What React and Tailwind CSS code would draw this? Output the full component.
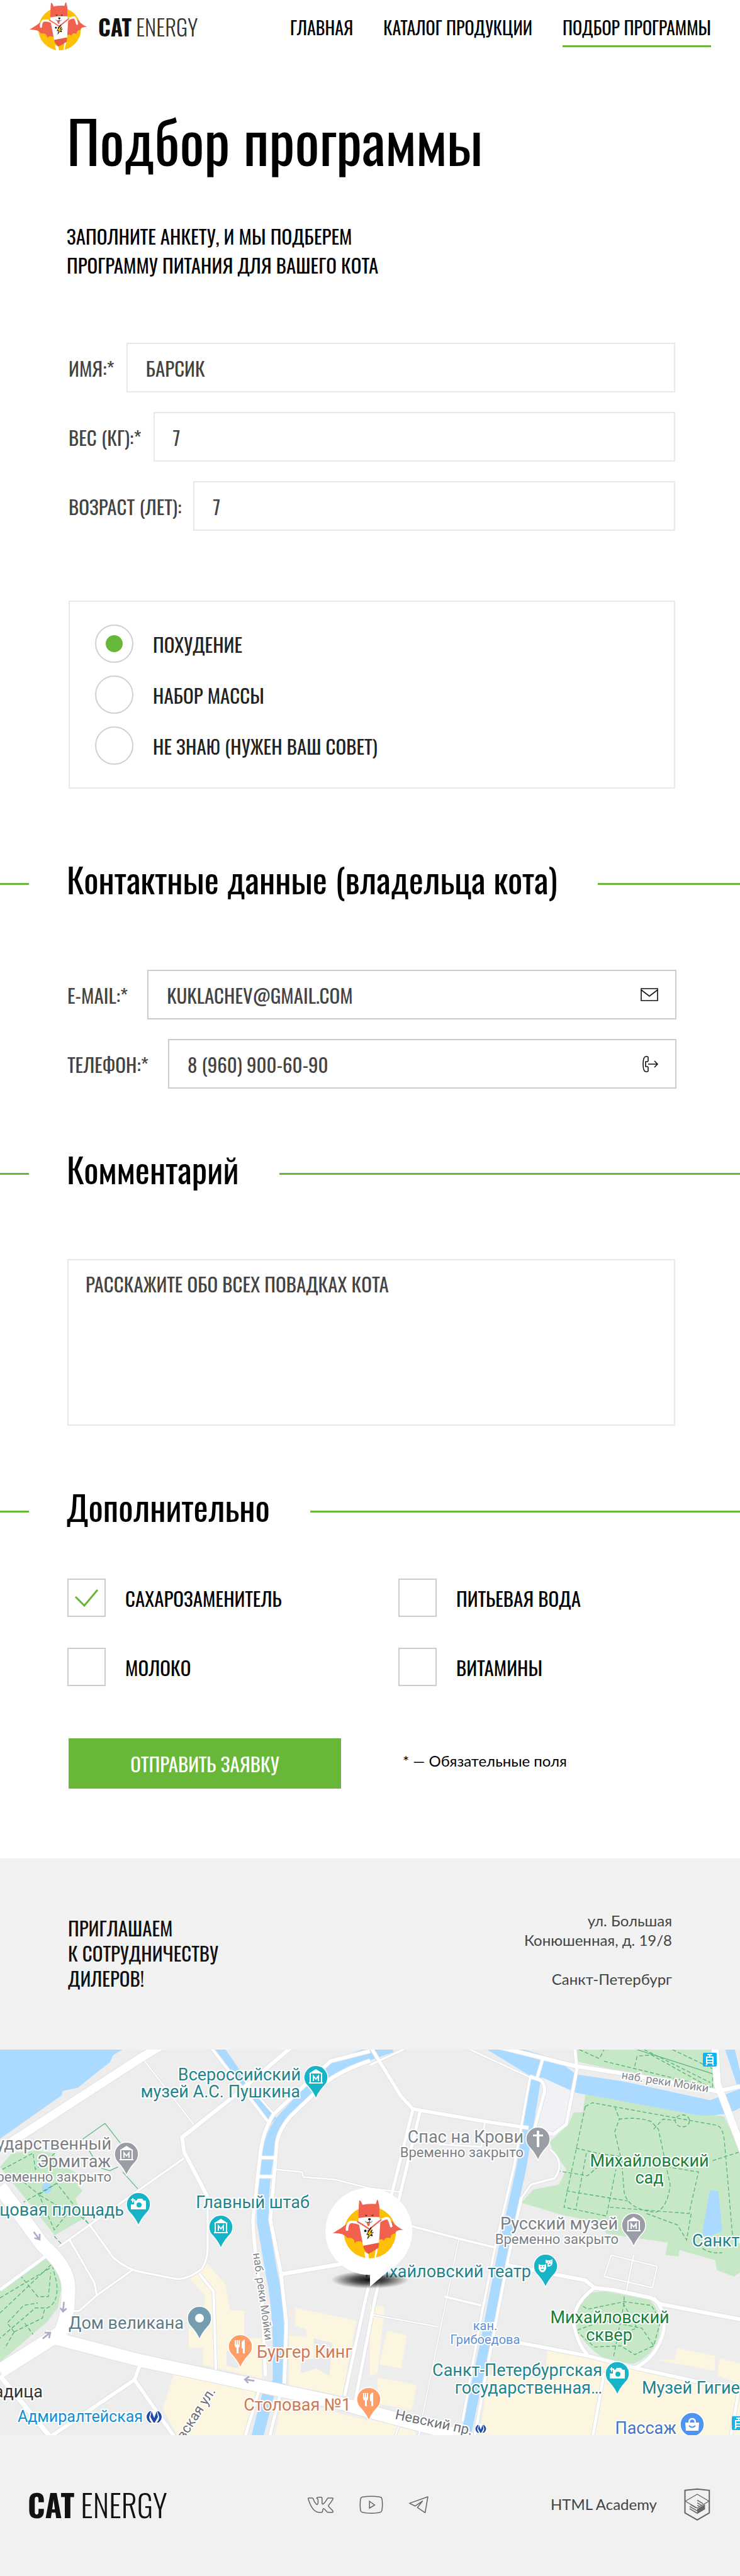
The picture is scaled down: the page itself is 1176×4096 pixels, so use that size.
import React from "react";

const GREEN = "#68b738";

/* ---------- logo ---------- */

function Cat({ className }) {
  return (
    <svg viewBox="60 10 362 300" className={className} aria-hidden="true">
      <circle cx="250" cy="178" r="132" fill="#fdc005" />
      <path fill="#f0624f" d="M62 182Q108 156 150 122L200 124L218 232Q190 212 173 232Q170 200 135 206Q118 180 62 182Z" />
      <path fill="#f0624f" d="M290 128L330 108L366 124Q384 150 420 166Q384 162 377 184Q356 184 354 208Q330 198 322 219Q308 206 292 220Z" />
      <path fill="#fff" d="M192 122L304 108L296 232L216 246Z" />
      <path fill="none" stroke="#fff" strokeWidth="13" strokeLinecap="round" strokeLinejoin="round" d="M200 134Q172 122 150 126Q134 136 134 164" />
      <path fill="none" stroke="#fff" strokeWidth="13" strokeLinecap="round" strokeLinejoin="round" d="M286 132Q314 106 342 106Q352 118 358 146" />
      <path fill="#fff" d="M192 100H298V122Q276 132 246 160Q216 132 192 122Z" />
      <path fill="none" stroke="#f0624f" strokeWidth="7" strokeLinecap="round" d="M188 124Q220 142 248 162Q276 138 306 114" />
      <path fill="#f0624f" d="M192 106L194 40L196 18Q198 12 204 20L213 38Q246 32 280 34L285 16Q289 8 292 18L298 46V100Q244 96 192 106Z" />
      <path fill="none" stroke="#2b1714" strokeWidth="2.6" strokeLinecap="round" d="M227 88L234 93M228 95L235 92M260 94L266 88M260 92L268 94" />
      <ellipse cx="248" cy="111" rx="7" ry="5" fill="#111" />
      <path fill="#f0624f" d="M234 127L250 126Q250 146 244 147Q236 146 234 127Z" />
      <path fill="none" stroke="#222" strokeWidth="2.6" strokeLinecap="round" d="M226 122Q232 130 246 126Q256 132 262 122M248 114V124" />
      <path fill="#111" d="M258 148L242 168L238 166L240 174L232 190L242 190L236 214L252 194L264 198L258 188L270 176L258 178L264 164L256 166Z" />
      <path fill="#fdc005" d="M254 160L236 186L246 186L241 202L264 180L252 180L258 166Z" />
      <circle cx="227" cy="170" r="6" fill="#111" />
      <circle cx="260" cy="192" r="4" fill="#111" />
      <path fill="#e85847" d="M216 246L296 230Q297 250 290 260Q264 276 243 287Q220 272 216 246Z" />
      <path fill="#fff" d="M221 276L242 288L246 311H228ZM280 264L291 260L280 307L272 310Z" />
    </svg>
  );
}

/* ---------- small icons ---------- */

function MailIcon() {
  return (
    <svg viewBox="0 0 28 21" className="w-7" fill="none" stroke="#111" strokeWidth="1.6" aria-hidden="true">
      <path d="M1 1H27V20H1ZM1 3L14 13L27 3" />
    </svg>
  );
}

function PhoneIcon() {
  return (
    <svg viewBox="0 0 26 26" className="w-[26px]" fill="none" stroke="#111" strokeWidth="1.6" strokeLinejoin="round" aria-hidden="true">
      <path d="M9 1H6Q2 2 2 13T6 25H9L10 24V18L9 17H6V9H9L10 8V2Z" />
      <path d="M10 13H24M20 8L25 13L20 18" />
    </svg>
  );
}

function VkIcon() {
  return (
    <svg viewBox="50 86 170 108" className="w-[43px]" fill="none" stroke="#666" strokeWidth="6" strokeLinejoin="round" aria-hidden="true">
      <path d="M59 98H82Q87 98 89 104Q98 130 110 138Q119 140 119 126V110Q118 102 110 99Q112 93 122 93H138Q144 93 144 101V128Q145 138 150 136Q162 128 178 101Q180 98 184 98H208Q216 98 211 107Q200 126 186 142Q182 148 188 154L208 174Q217 184 210 188H184Q178 188 174 184L160 168Q150 160 148 174Q148 188 142 188H122Q84 184 60 112Q54 98 59 98Z" />
    </svg>
  );
}

function YoutubeIcon() {
  return (
    <svg viewBox="370 82 148 114" className="w-[38px]" fill="none" stroke="#666" strokeWidth="6" aria-hidden="true">
      <path d="M388 92Q444 82 500 92Q508 94 510 102Q516 139 510 174Q508 184 500 186Q444 198 388 186Q380 184 378 176Q372 139 378 102Q380 94 388 92Z" />
      <path d="M433 118V160L465 141Z" />
    </svg>
  );
}

function TelegramIcon() {
  return (
    <svg viewBox="692 84 124 112" className="w-8" fill="none" stroke="#666" strokeWidth="6" strokeLinejoin="round" aria-hidden="true">
      <path d="M699 132L812 92L795 190L748 158L779 118L733 149Z" />
    </svg>
  );
}

function AcademyIcon() {
  return (
    <svg viewBox="364 60 166 208" className="w-[42px]" fill="none" stroke="#666" aria-hidden="true">
      <path strokeWidth="8" d="M370 75L447 67L523 75V217L447 261L370 217Z" />
      <path strokeWidth="5" d="M372 143L447 99L521 143L447 187Z" />
      <path strokeWidth="6" d="M447 137L484 159M447 153L474 169M447 168L462 177M399 176L447 204M399 190L447 219M404 164L440 185" />
      <path fill="#666" stroke="none" d="M447 192L496 163V194L447 223Z" />
    </svg>
  );
}

/* ---------- map ---------- */

const WATER_LINES = [
  ["M920 0L1030 150L1155 300", 42],
  ["M1660 0L1520 45Q1390 85 1340 150L1230 260Q1150 330 1138 420Q1110 560 1114 700L1150 900Q1188 1050 1180 1340L1140 1370L1088 1560", 50],
  ["M2275 110L2235 340L2210 480L2128 830L2058 1170L1978 1530", 42],
];

const ROADS = [
  ["M0 410L600 45L680 0", 34],
  ["M0 560L180 790Q290 880 290 960Q290 1080 255 1140L0 1290", 58],
  ["M190 1150L600 1250L1450 1420L1568 1452L2000 1560", 50],
  ["M0 1310L220 1560", 20],
  ["M215 1550L570 1325L595 1262", 15],
  ["M570 1325L745 1560", 15],
  ["M0 968L200 830", 13],
  ["M250 797L380 710L780 445", 8],
  ["M380 710L480 840Q540 888 600 898L750 925Q800 925 855 885Q880 850 880 800L880 600", 8],
  ["M880 600L780 420L772 362L990 200L1240 0", 16],
  ["M605 50L820 310", 5],
  ["M295 770L400 940L410 990M560 890L410 990L335 1052H310", 8],
  ["M845 905L905 975L915 1285", 11],
  ["M890 0L1135 300", 12],
  ["M1040 140L1160 270", 7],
  ["M1568 20L1400 60L1320 130L1160 270Q1110 340 1100 450L1072 690Q1080 850 1110 1000L1125 1310", 15],
  ["M1568 58Q1400 110 1330 190L1230 280Q1175 340 1172 400L1146 690L1190 900L1214 1100L1205 1340", 15],
  ["M1095 1375L1035 1560M1185 1390L1140 1560", 13],
  ["M1095 443H1165M1090 518H1160", 13],
  ["M1195 905L1450 865", 16],
  ["M1170 490L1280 500L1285 520L1420 530L1568 565L1700 580", 6],
  ["M1750 250L1550 1000L1460 1390", 13],
  ["M1780 260L1590 1000L1505 1410", 13],
  ["M1568 0L1700 200L1750 250L2060 300L2240 325", 14],
  ["M1568 75L1740 0", 8],
  ["M2247 120L2178 480L2100 790L2040 1070L1960 1490", 10],
  ["M2245 120L2290 135Q2310 150 2308 180L2265 330L2345 350L2400 310L2445 90L2435 0", 13],
  ["M2330 410Q2400 460 2350 525L2250 550L2205 610", 8],
  ["M2210 600L2150 860L2060 1300L2010 1560", 12],
  ["M2100 0L2440 80L2680 115L3040 180L3136 160", 16],
  ["M1960 0L2260 130", 6],
  ["M2300 50L2275 130", 12],
  ["M3030 0L3040 150L3150 420", 30],
  ["M1745 715L1945 765L2100 800", 9],
  ["M1945 765L1770 1560", 4],
  ["M1885 995L2040 1030", 9],
  ["M1568 1065L1855 1115", 5],
  ["M2055 300L2040 400L1860 390", 7],
  ["M2150 870L2480 930L2520 960L2600 968L2760 1000L2800 1025L3136 1085", 15],
  ["M2520 960Q2430 1020 2430 1100Q2450 1190 2490 1225", 14],
  ["M2770 1000Q2830 1060 2810 1140Q2780 1240 2690 1278", 14],
  ["M2100 1160L2490 1230L2700 1280L3136 1370", 14],
  ["M2590 830L2785 875L2765 960L2560 915ZM2685 830L2655 970", 5],
  ["M2560 1300L2510 1560M3130 1370L3095 1560", 12],
  ["M1690 1510L1670 1560M1780 1530L1770 1560", 6],
];

const PARK_PATHS = [
  "M10 490L140 425L150 490L240 420M100 540L165 590L230 730L290 660L165 590L240 545L375 705M240 545L100 620M375 705L310 650",
  "M0 1060L220 865L240 940Q250 1020 200 1040L150 1040L0 1160M0 1000L215 880M85 910L160 995H205L215 900M60 1135L30 1100L100 1030L160 1020M60 1135L180 1080L190 1040M60 1135L20 1200M105 1100L140 1145",
  "M2480 240L2510 225L3040 315Q3065 325 3070 380L3105 760M2480 240L2390 640L2570 675L2610 490M2605 240L2625 290Q2700 280 2760 300L2790 330L2840 550Q2830 640 2780 660Q2660 650 2645 580L2635 460L2605 340L2625 290M2440 405L2530 425L2640 440M2400 575L2660 615M2585 640L2920 665L2960 500L2830 480M2740 665L2870 710L2910 770L2930 660M2360 495L2490 515L2570 450M2770 330L2810 290L2860 295M2940 770Q2990 830 3060 820M3020 455L3136 420M2485 425L2440 650",
  "M2455 14L2540 50L2560 14M2690 80L2700 40L2760 35L3020 170V110M2730 14L3010 145M2560 60L3020 165M2850 14L3020 90",
  "M2450 1020L2490 1045L2645 1015L2760 1030L2800 1090L2770 1190L2690 1225L2630 1190L2520 1195L2440 1130L2560 1090L2720 1120L2770 1190M2645 995V1020L2600 1235M2640 1020L2700 1120L2600 1150",
];

const TEAL = "#1f848c";
const GRAY = "#7b7f85";
const PARK = "#188038";

const LABELS = [
  ["Всероссийский", 478, 49, 27, TEAL, "end"],
  ["музей А.С. Пушкина", 477, 76, 27, TEAL, "end"],
  ["Государственный", 177, 159, 27, GRAY, "end"],
  ["Эрмитаж", 176, 187, 27, GRAY, "end"],
  ["Временно закрыто", 177, 210, 22, GRAY, "end"],
  ["Дворцовая площадь", 197, 264, 27, TEAL, "end"],
  ["Главный штаб", 492, 252, 27, TEAL, "end"],
  ["Дом великана", 292, 444, 27, "#5f7a88", "end"],
  ["Бургер Кинг", 408, 490, 27, "#d3774d", "start"],
  ["Столовая №1", 558, 574, 27, "#d3774d", "end"],
  ["Адмиралтейская", 227, 592, 25, "#128fd6", "end"],
  ["адица", 68, 553, 27, "#333", "end"],
  ["Спас на Крови", 832, 148, 27, GRAY, "end"],
  ["Временно закрыто", 832, 171, 22, GRAY, "end"],
  ["Михайловский", 1032, 186, 27, PARK, "middle"],
  ["сад", 1032, 213, 27, PARK, "middle"],
  ["Русский музей", 982, 286, 27, GRAY, "end"],
  ["Временно закрыто", 983, 309, 22, GRAY, "end"],
  ["Санкт-Петербург", 1100, 313, 27, TEAL, "start"],
  ["Михайловский театр", 844, 362, 27, TEAL, "end"],
  ["Михайловский", 969, 435, 27, PARK, "middle"],
  ["сквер", 968, 463, 27, PARK, "middle"],
  ["кан.", 771, 446, 20, "#5f8fd3", "middle"],
  ["Грибоедова", 771, 468, 20, "#5f8fd3", "middle"],
  ["Санкт-Петербургская", 957, 519, 27, TEAL, "end"],
  ["государственная…", 957, 547, 27, TEAL, "end"],
  ["Музей Гигиены", 1020, 547, 27, TEAL, "start"],
  ["Пассаж", 1075, 611, 27, "#4673c5", "end"],
];

const STREETS = [
  ["наб. реки Мойки", 402, 324, 18, 82, "#84878c"],
  ["вская ул.", 292, 622, 22, -57, "#6b6e73"],
  ["наб. реки Мойки", 987, 46, 18, 9, "#84878c"],
  ["Невский пр.", 627, 587, 22, 12, "#6b6e73"],
];

const GLYPHS = {
  museum: (
    <g fill="none" stroke="#fff" strokeWidth="2">
      <path fill="#fff" stroke="none" d="M0-13L11-6H-11Z" />
      <path d="M-9-6V8M9-6V8M-11 9H11" />
      <path d="M-4 6V-2L0 3L4-2V6" />
    </g>
  ),
  camera: (
    <g>
      <path fill="#fff" d="M-7-4V-6H-3L-1-9H6L8-6H12V8H-12V0H-7Z" />
      <path stroke="#fff" strokeWidth="2" d="M-9-10V-3M-12-7H-5" />
      <circle cx="1" cy="1" r="4" fill="#17b3c6" />
    </g>
  ),
  dot: <circle r="7" fill="#fff" />,
  food: <path fill="#fff" d="M-9-10H-7V-3H-6V-10H-4V-3H-3V-10H-1V-2Q-1 1-3 2V11H-6V2Q-9 1-9-2ZM4 11V3H2V-6Q3-10 7-11V11Z" />,
  cross: <path fill="#fff" d="M-2-13H2V-7H8V-4H2V13H-2V-4H-8V-7H-2Z" />,
  masks: (
    <g fill="#fff">
      <path d="M-11-3Q-5 0 1-3V4Q-1 10-5 10T-11 4Z" />
      <path d="M0-10Q6-7 11-11V-4Q9 2 3 1V-5L0-4Z" />
      <path stroke="#17b3c6" fill="none" strokeWidth="1.5" d="M-8 1H-6M-4 1H-2M-7 5Q-5 7-3 5M4-6H5M8-7H9M5-2L8-3" />
    </g>
  ),
};

const PINS = [
  [502, 44, "#17b3c6", "museum"],
  [201, 166, "#9a9da6", "museum"],
  [220, 246, "#17b3c6", "camera"],
  [351, 282, "#17b3c6", "museum"],
  [317, 427, "#769cb0", "dot"],
  [382, 472, "#ff9e67", "food"],
  [586, 556, "#ff9e67", "food"],
  [855, 142, "#9a9da6", "cross"],
  [1007, 279, "#9a9da6", "museum"],
  [867, 344, "#17b3c6", "masks"],
  [981, 515, "#17b3c6", "camera"],
];

function Tram({ x, y }) {
  return (
    <g transform={`translate(${x} ${y})`}>
      <rect x="-11" y="-11" width="22" height="22" rx="2" fill="#14b4f0" />
      <path fill="none" stroke="#fff" strokeWidth="2" d="M-4-8H4M0-8V-4M-5-4H5V5H-5ZM-5 1H5M-4 6L-6 9M4 6L6 9" />
    </g>
  );
}

function Metro({ x, y, k = 1 }) {
  return (
    <g transform={`translate(${x} ${y}) scale(${k})`}>
      <ellipse rx="14" ry="11" fill="#fff" />
      <path fill="#1f4aa8" d="M-7-9Q-12-5-12 0T-7 9H-4Q-8 5-8 0L-5-9ZM7-9Q12-5 12 0T7 9H4Q8 5 8 0L5-9ZM-4-9L0 2L4-9L6 0L1 9H-1L-6 0Z" />
    </g>
  );
}

function CityMap() {
  return (
    <div className="relative overflow-hidden">
      <svg viewBox="0 0 1176 613" className="block h-auto w-full bg-[#ededee]" role="img" aria-label="Карта: ул. Большая Конюшенная, д. 19/8">
        <defs>
          <radialGradient id="pin-shadow">
            <stop offset="0" stopColor="#000" stopOpacity=".95" />
            <stop offset=".45" stopColor="#000" stopOpacity=".65" />
            <stop offset="1" stopColor="#000" stopOpacity="0" />
          </radialGradient>
        </defs>
        <g transform="scale(.375 .4004) translate(0 -14)">
          <g fill="#fcf6e0">
            <path d="M805 925L880 865L955 945L975 1050H1035V1160H1110V1320L860 1265V1200H800V1120L860 1110L870 990Z" />
            <path d="M735 1305L1085 1370L1035 1560H760L690 1440Z" />
            <path d="M1250 1040L1510 1090L1450 1390L1225 1345V1150L1300 1155V1125L1250 1110Z" />
            <path d="M1200 1400L1568 1490V1560H1160Z" />
            <path d="M1568 1030L1630 1035L1600 1300L1568 1310ZM1640 1130L1725 1150L1700 1280L1608 1265ZM1600 1315L1765 1345L1745 1445L1600 1420ZM1568 1480L1760 1530V1560H1568Z" />
            <path d="M2320 1205L2700 1280L3136 1380V1560H2030L2070 1305L2310 1320ZM2870 1200L3030 1230V1290L2780 1245H2860ZM3050 1240L3136 1260V1340L3040 1310Z" />
          </g>
          <path fill="#e9eaed" d="M1330 1160L1410 1180L1395 1310L1340 1280L1275 1300V1250L1330 1240ZM960 1210H1010V1280L960 1270Z" />
          <path fill="#f0f2f5" d="M2310 130L2420 170L2400 310L2340 340L2280 320Z" />
          <g fill="#c6e8c7">
            <path d="M0 480L50 425L150 415L225 425L260 475L320 500L330 555L350 575L320 605L352 685L232 752L180 690Z" />
            <path d="M200 835L240 880L265 940L245 1040L200 1095L0 1255V970Z" />
            <path d="M2440 0H3030L3034 180L2680 110L2440 60Z" />
            <path d="M2480 190L3068 280L3136 400V900L3110 915L3038 890L3030 850L2880 810L2875 835L2820 830L2830 780L2570 745L2540 700L2380 670L2210 622L2260 570L2370 550L2400 490L2340 410L2330 380L2410 310L2430 265L2470 262Z" />
            <path d="M2468 1000Q2500 972 2568 975L2748 1005Q2808 1050 2793 1150Q2760 1240 2680 1262L2568 1245Q2470 1190 2438 1110Q2430 1050 2468 1000Z" />
          </g>
          <g fill="#aadaff">
            <path d="M0 0H545L480 35L465 65L430 90L330 165L265 178L262 195L0 368Z" />
            <path d="M2040 0H2170L2300 35L2390 75L2440 112L2640 140L3010 215L3136 170V245Q3080 280 2960 275L2790 245L2440 185L2300 125L2250 120Z" />
            <path d="M3068 0H3110L3150 150L3125 160Z" />
            <path d="M3008 572L3045 578L3060 735L2985 765L2978 730Z" />
            <ellipse cx="198" cy="563" rx="20" ry="22" />
          </g>
          <g fill="none" stroke="#aadaff">
            {WATER_LINES.map(([d, w]) => (
              <path key={d} d={d} strokeWidth={w} />
            ))}
          </g>
          <g fill="none" stroke="#58b57a" strokeWidth="3.5" strokeDasharray="16 9">
            {PARK_PATHS.map((d) => (
              <path key={d} d={d} />
            ))}
            <ellipse cx="2892" cy="297" rx="30" ry="24" />
          </g>
          <path fill="none" stroke="#58b57a" strokeWidth="3" d="M350 370L445 307L510 385M378 415L400 450M430 485L465 495L500 480M520 500L585 568M2700 14L3020 110" />
          <g fill="none" stroke="#dfe1e4" strokeLinejoin="round">
            {ROADS.map(([d, w]) => (
              <path key={d} d={d} strokeWidth={w + 5} />
            ))}
          </g>
          <g fill="none" stroke="#fff" strokeLinejoin="round">
            {ROADS.map(([d, w]) => (
              <path key={d} d={d} strokeWidth={w} />
            ))}
          </g>
          <path fill="none" stroke="#58b57a" strokeWidth="3.5" strokeDasharray="16 9" d="M230 755L262 788" />
          <g fill="none" stroke="#aeadc8" strokeWidth="7">
            <path d="M143 738L164 764M168 745V768L146 762" />
            <path d="M271 1016L267 1052M256 1040L267 1054L282 1042" />
            <path d="M181 1162L212 1138M190 1138H213L208 1160" />
            <path d="M1078 1329L1040 1324M1056 1312L1038 1324L1052 1338" />
          </g>
        </g>

        <g stroke="#fff" strokeWidth="4" strokeLinejoin="round" className="font-[Roboto,sans-serif] [paint-order:stroke]">
          {STREETS.map(([t, x, y, s, a, c]) => (
            <text key={t + x} fontSize={s} fill={c} transform={`translate(${x} ${y}) rotate(${a})`}>
              {t}
            </text>
          ))}
          {LABELS.map(([t, x, y, s, c, anchor]) => (
            <text key={t + x + y} x={x} y={y} fontSize={s} fill={c} textAnchor={anchor}>
              {t}
            </text>
          ))}
        </g>

        {PINS.map(([x, y, c, icon]) => (
          <g key={`${x}-${y}`} transform={`translate(${x} ${y})`}>
            <path d="M0 34Q-4 24-13 14A19 19 0 1 1 13 14Q4 24 0 34Z" fill={c} stroke="#fff" strokeWidth="1.5" />
            {GLYPHS[icon]}
          </g>
        ))}
        <g transform="translate(1100 596)">
          <circle r="19" fill="#4f94f2" stroke="#fff" strokeWidth="1.5" />
          <path fill="#fff" d="M-11-3H11L10 10H-10Z" />
          <path fill="none" stroke="#fff" strokeWidth="2.5" d="M-5-2Q-5-9 0-9T5-2" />
          <path fill="none" stroke="#4f94f2" strokeWidth="2" d="M-5 2Q0 7 5 2" />
        </g>
        <Tram x={1128} y={16} />
        <Tram x={1174} y={594} />
        <Metro x={245} y={584} />
        <Metro x={764} y={603} k={0.7} />

        <ellipse cx="588" cy="366" rx="62" ry="14" fill="url(#pin-shadow)" />
        <path fill="#fff" d="M588 377V358A69 69 0 1 1 622 348Z" />
        <g transform="translate(528 238)">
          <svg width="114" height="94">
            <Cat />
          </svg>
        </g>
      </svg>
    </div>
  );
}

/* ---------- form parts ---------- */

function SectionTitle({ children }) {
  return (
    <div className="flex items-center">
      <span className="mt-4 h-[3px] w-[46px] shrink-0 bg-[#68b738]" />
      <h2 className="mr-[64px] ml-[60px] text-[55px] leading-[56px] text-black">{children}</h2>
      <span className="mt-4 h-[3px] grow bg-[#68b738]" />
    </div>
  );
}

function Field({ id, label, type = "text", value }) {
  return (
    <div className="flex items-center gap-[19px] pl-0.5">
      <label htmlFor={id} className="shrink-0 text-[31px] leading-[40px] text-[#444]">
        {label}
      </label>
      <input
        id={id}
        type={type}
        defaultValue={value}
        className="h-[79px] min-w-0 grow border-2 border-[#e8e8e8] bg-white px-[29px] text-[31px] text-[#444]"
      />
    </div>
  );
}

function ContactField({ id, label, type, value, icon }) {
  return (
    <div className="flex items-center gap-[31px]">
      <label htmlFor={id} className="shrink-0 text-[31px] leading-[40px] text-[#444]">
        {label}
      </label>
      <div className="relative grow">
        <input
          id={id}
          type={type}
          defaultValue={value}
          className="block h-[79px] w-full border-2 border-[#ccc] bg-white pr-20 pl-[29px] text-[31px] text-[#444]"
        />
        <span className="pointer-events-none absolute inset-y-0 right-[29px] flex items-center">{icon}</span>
      </div>
    </div>
  );
}

function Radio({ label, checked }) {
  return (
    <label className="flex w-fit items-center gap-[31px] text-[31px] leading-[40px] text-[#222]">
      <input
        type="radio"
        name="goal"
        defaultChecked={checked}
        className="grid size-[61px] appearance-none place-items-center rounded-full border-2 border-[#d0d0d0] before:size-[27px] before:rounded-full checked:before:bg-[#68b738]"
      />
      {label}
    </label>
  );
}

function Check({ label, checked }) {
  return (
    <label className="flex w-fit items-center gap-[31px] text-[31px] leading-[40px] text-black">
      <span className="relative size-[61px]">
        <input type="checkbox" defaultChecked={checked} className="peer block size-full appearance-none border-2 border-[#cdcdcd]" />
        <svg viewBox="0 0 61 61" className="pointer-events-none absolute inset-0 hidden peer-checked:block" fill="none" stroke={GREEN} strokeWidth="3" aria-hidden="true">
          <path d="M13 29L27 43L48 18" />
        </svg>
      </span>
      {label}
    </label>
  );
}

/* ---------- page ---------- */

export default function App() {
  return (
    <div className="bg-white font-[Oswald,sans-serif] text-black">
      <header className="flex items-start justify-between pr-[46px] pl-[46px]">
        <a href="#home" className="flex items-start gap-[17px] pt-[3px]">
          <Cat className="h-[77px] w-[93px]" />
          <span className="pt-[18px] text-[35px] leading-[42px] font-light text-[#333]">
            <b className="font-bold text-[#111]">CAT</b> ENERGY
          </span>
        </a>
        <nav className="flex gap-[48px] pt-[30px] text-[28px] leading-[28px]">
          <a href="#main">ГЛАВНАЯ</a>
          <a href="#catalog">КАТАЛОГ ПРОДУКЦИИ</a>
          <a href="#form" className="border-b-3 border-[#68b738] pb-[14px]">ПОДБОР ПРОГРАММЫ</a>
        </nav>
      </header>

      <main>
        <div className="pt-[97px] pr-[103px] pl-[106px]">
          <h1 className="text-[92px] leading-[92px]">Подбор программы</h1>
          <p className="mt-[83px] text-[31px] leading-[46px]">
            ЗАПОЛНИТЕ АНКЕТУ, И МЫ ПОДБЕРЕМ
            <br />
            ПРОГРАММУ ПИТАНИЯ ДЛЯ ВАШЕГО КОТА
          </p>
        </div>

        <form onSubmit={(e) => e.preventDefault()}>
          <div className="mt-[101px] flex flex-col gap-[31px] pr-[103px] pl-[107px]">
            <Field id="name" label="ИМЯ:*" value="БАРСИК" />
            <Field id="weight" label="ВЕС (КГ):*" value="7" />
            <Field id="age" label="ВОЗРАСТ (ЛЕТ):" value="7" />
          </div>

          <fieldset className="mt-[111px] mr-[103px] ml-[109px] flex flex-col gap-[20px] border-2 border-[#e8e8e8] px-[40px] py-[36px]">
            <Radio label="ПОХУДЕНИЕ" checked />
            <Radio label="НАБОР МАССЫ" />
            <Radio label="НЕ ЗНАЮ (НУЖЕН ВАШ СОВЕТ)" />
          </fieldset>

          <section className="mt-[115px]">
            <SectionTitle>Контактные данные (владельца кота)</SectionTitle>
            <div className="mt-[117px] flex flex-col gap-[31px] pr-[101px] pl-[107px]">
              <ContactField id="email" type="email" label="E-MAIL:*" value="KUKLACHEV@GMAIL.COM" icon={<MailIcon />} />
              <ContactField id="phone" type="tel" label="ТЕЛЕФОН:*" value="8 (960) 900-60-90" icon={<PhoneIcon />} />
            </div>
          </section>

          <section className="mt-[99px]">
            <SectionTitle>Комментарий</SectionTitle>
            <div className="mt-[116px] pr-[103px] pl-[107px]">
              <textarea
                aria-label="Комментарий"
                placeholder="РАССКАЖИТЕ ОБО ВСЕХ ПОВАДКАХ КОТА"
                className="block h-[265px] w-full resize-none border-2 border-[#e8e8e8] px-[27px] py-[15px] text-[31px] leading-[44px] text-[#444] placeholder:text-[#444]"
              />
            </div>
          </section>

          <section className="mt-[100px]">
            <SectionTitle>Дополнительно</SectionTitle>
            <div className="mt-[87px] grid grid-cols-2 gap-x-[86px] gap-y-[49px] pr-[103px] pl-[107px]">
              <Check label="САХАРОЗАМЕНИТЕЛЬ" checked />
              <Check label="ПИТЬЕВАЯ ВОДА" />
              <Check label="МОЛОКО" />
              <Check label="ВИТАМИНЫ" />
            </div>
          </section>

          <div className="mt-[83px] grid grid-cols-2 items-center gap-x-[98px] pr-[103px] pl-[109px]">
            <button type="submit" className="h-[80px] bg-[#68b738] text-[31px] text-white">
              ОТПРАВИТЬ ЗАЯВКУ
            </button>
            <p className="pb-2 font-[Lato,sans-serif] text-[24px] leading-[30px]">* — Обязательные поля</p>
          </div>
        </form>

        <section className="mt-[111px] flex items-start justify-between bg-[#f2f2f2] pt-[83px] pr-[108px] pb-[94px] pl-[108px]">
          <p className="pt-[7px] text-[31px] leading-[40px] text-[#111]">
            ПРИГЛАШАЕМ
            <br />К СОТРУДНИЧЕСТВУ
            <br />
            ДИЛЕРОВ!
          </p>
          <address className="text-right font-[Lato,sans-serif] text-[24px] leading-[31px] text-[#444] not-italic">
            ул. Большая
            <br />
            Конюшенная, д. 19/8
            <br />
            <br />
            Санкт-Петербург
          </address>
        </section>

        <CityMap />
      </main>

      <footer className="flex items-center justify-between bg-[#f1f1f1] pt-[84px] pr-[47px] pb-[88px] pl-[44px]">
        <a href="#home" className="text-[49px] leading-[52px] font-light text-[#111]">
          <b className="font-bold">CAT</b> ENERGY
        </a>
        <div className="flex items-center gap-[40px] pl-7">
          <a href="#vk" aria-label="VK"><VkIcon /></a>
          <a href="#youtube" aria-label="YouTube"><YoutubeIcon /></a>
          <a href="#telegram" aria-label="Telegram"><TelegramIcon /></a>
        </div>
        <a href="#academy" className="flex items-center gap-[43px] font-[Lato,sans-serif] text-[24px] leading-[30px] text-[#444]">
          HTML Academy
          <AcademyIcon />
        </a>
      </footer>
    </div>
  );
}
